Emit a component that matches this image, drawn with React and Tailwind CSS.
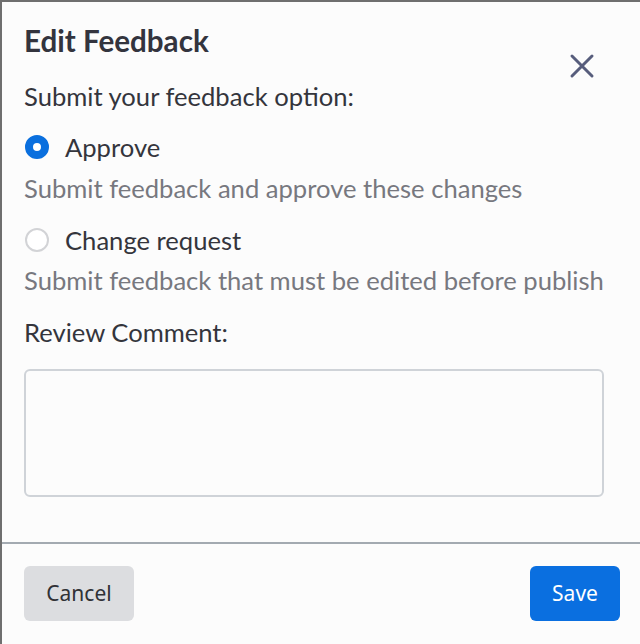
export default function App() {
  return (
    <div className="relative w-[640px] h-[644px] bg-[#fcfcfc] border-l-2 border-t-2 border-[#6f6f6f] flex flex-col font-['Lato',sans-serif] text-[#34353c] overflow-hidden">
      <button className="absolute top-[51px] right-[45px] text-[#575d7c]" aria-label="Close">
        <svg width="26" height="26" viewBox="0 0 26 26" fill="none" stroke="currentColor" strokeWidth="3" strokeLinecap="round" className="block">
          <path d="M3 3L23 23M23 3L3 23" />
        </svg>
      </button>

      <div className="px-[22px] pt-[21px] flex-1 flex flex-col">
        <h2 className="text-[29.6px] leading-[36px] font-bold text-[#33343e]">Edit Feedback</h2>
        <p className="mt-[22px] text-[25.6px] leading-[30px]">Submit your feedback option:</p>

        <label className="mt-[21px] flex items-center gap-[16px] text-[25.6px] leading-[30px]">
          <span className="ml-[1px] w-[24px] h-[24px] rounded-full border-[8px] border-[#0a6fde] bg-white shrink-0" />
          Approve
        </label>
        <p className="mt-[11px] text-[25.6px] leading-[30px] text-[#77787f]">Submit feedback and approve these changes</p>

        <label className="mt-[22px] flex items-center gap-[16px] text-[25.6px] leading-[30px]">
          <span className="ml-[1px] w-[24px] h-[24px] rounded-full border-2 border-[#d2d3d6] bg-white shrink-0" />
          Change request
        </label>
        <p className="mt-[10px] text-[25.6px] leading-[30px] text-[#77787f]">Submit feedback that must be edited before publish</p>

        <p className="mt-[22px] text-[25.6px] leading-[30px]">Review Comment:</p>
        <textarea className="mt-[22px] w-[580px] h-[128px] rounded-[6px] border-2 border-[#cfd3d8] bg-[#fcfcfc] resize-none outline-none" />
      </div>

      <div className="border-t-2 border-[#a3aab1] h-[102px] pl-[22px] pr-[20px] pt-[22px] flex justify-between items-start font-['Noto_Sans',sans-serif]">
        <button className="w-[110px] h-[55px] rounded-[6px] bg-[#dcdde0] text-[21px] text-[#303136]">Cancel</button>
        <button className="w-[90px] h-[55px] rounded-[6px] bg-[#0a6fe0] text-[21px] text-white">Save</button>
      </div>
    </div>
  );
}
